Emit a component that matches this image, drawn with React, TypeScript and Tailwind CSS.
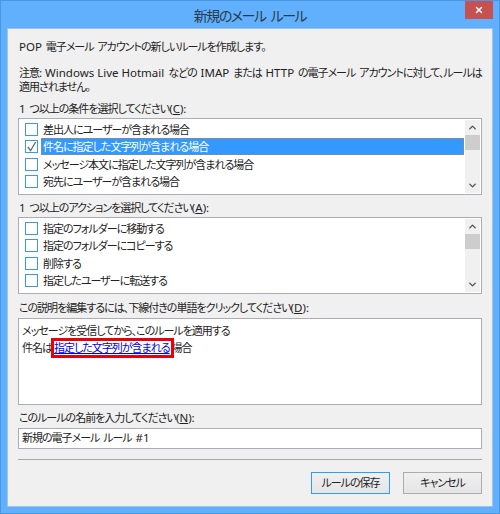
import React from 'react';
import { ChevronUp, ChevronDown, X } from 'lucide-react';

const font = "font-['Noto_Sans','Noto_Sans_CJK_JP',sans-serif] [font-feature-settings:'palt']";

// latin runs are wider than the squeezed kana around them
const L = ({ children }: { children: React.ReactNode }) => (
  <span className="text-[11.5px] tracking-normal [word-spacing:0px]">{children}</span>
);

const Access = ({ k }: { k: string }) => (
  <L>
    (<span className="underline">{k}</span>):
  </L>
);

const CheckIcon = () => (
  <svg viewBox="0 0 12 12" className="w-3 h-3">
    <path d="M2 6 L5 10 L10.5 0.5" fill="none" stroke="#5a6b80" strokeWidth="1.4" />
  </svg>
);

const Row = ({ text, checked, selected }: { text: string; checked?: boolean; selected?: boolean }) => (
  <div className="flex items-center h-[17.3px]">
    <div className="ml-[6px] w-[13px] h-[13px] border border-[#3a9ae8] bg-white flex items-center justify-center shrink-0">
      {checked && <CheckIcon />}
    </div>
    <div
      className={`ml-[3px] mr-[1px] flex-1 h-[17px] pl-[2px] leading-[17px] whitespace-nowrap overflow-hidden ${
        selected ? 'bg-[#3399ff] text-white outline-1 outline-dotted outline-[#c08040] -outline-offset-1' : ''
      }`}
    >
      {text}
    </div>
  </div>
);

const Scrollbar = () => (
  <div className="w-[15px] mr-[1px] my-[1px] bg-[#f0f0f0] flex flex-col items-center shrink-0">
    <ChevronUp className="w-[11px] h-[15px] text-[#505050]" strokeWidth={3} />
    <div className="w-full h-[15px] bg-[#cdcdcd]" />
    <div className="flex-1" />
    <ChevronDown className="w-[11px] h-[15px] text-[#505050]" strokeWidth={3} />
  </div>
);

const CheckList = ({ rows }: { rows: { text: string; checked?: boolean; selected?: boolean }[] }) => (
  <div className="mx-[10px] h-[77px] border border-[#abadb3] bg-white flex">
    <div className="flex-1 pt-[2px] min-w-0 overflow-hidden">
      {rows.map((r) => (
        <Row key={r.text} {...r} />
      ))}
    </div>
    <Scrollbar />
  </div>
);

export default function App() {
  return (
    <div
      className={`w-[500px] h-[514px] bg-[#60b0fd] border border-[#4a97e0] flex flex-col text-[11px] tracking-[-1px] [word-spacing:2px] text-[#222] relative ${font}`}
    >
      {/* Title bar */}
      <div className="h-[27px] flex items-center justify-center text-[14px] tracking-[-1.5px] [word-spacing:3px] text-[#2a3a4a] shrink-0 pt-[1px]">
        新規のメール ルール
      </div>
      <div className="absolute right-[6px] top-0 w-[28px] h-[18px] bg-[#c75050] flex items-center justify-center">
        <X className="w-[10px] h-[10px] text-white" strokeWidth={3.5} />
      </div>

      {/* Body */}
      <div className="mx-[6px] h-[479px] bg-[#f0f0f0] border border-[#9fc4e6] flex flex-col">
        <div className="px-[11px] pt-[11px] leading-[14px]">
          <L>POP</L> 電子メール アカウントの新しいルールを作成します。
        </div>
        <div className="px-[11px] pt-[12px] leading-[14px] whitespace-nowrap">
          注意<L>: Windows Live Hotmail</L> などの <L>IMAP</L> または <L>HTTP</L> の電子メール アカウントに対して、ルールは
          <br />
          適用されません。
        </div>
        <div className="px-[11px] pt-[8px] h-[24px] leading-[14px]">
          <L>1</L> つ以上の条件を選択してください<Access k="C" />
        </div>
        <CheckList
          rows={[
            { text: '差出人にユーザーが含まれる場合' },
            { text: '件名に指定した文字列が含まれる場合', checked: true, selected: true },
            { text: 'メッセージ本文に指定した文字列が含まれる場合' },
            { text: '宛先にユーザーが含まれる場合' },
          ]}
        />
        <div className="px-[11px] pt-[6px] h-[22px] leading-[14px]">
          <L>1</L> つ以上のアクションを選択してください<Access k="A" />
        </div>
        <CheckList
          rows={[
            { text: '指定のフォルダーに移動する' },
            { text: '指定のフォルダーにコピーする' },
            { text: '削除する' },
            { text: '指定したユーザーに転送する' },
          ]}
        />
        <div className="px-[11px] pt-[7px] h-[24px] leading-[14px]">
          この説明を編集するには、下線付きの単語をクリックしてください<Access k="D" />
        </div>
        <div className="mx-[10px] h-[87px] border border-[#abadb3] bg-white px-[3px] pt-[3px] leading-[17px]">
          <div>メッセージを受信してから、このルールを適用する</div>
          <div className="whitespace-nowrap">
            件名は
            <span className="relative ml-[2px] mr-[2px] text-[#0000ee] underline">
              指定した文字列が含まれる
              <span className="absolute -left-[3px] -right-[4px] -top-[2px] -bottom-[3px] border-[3px] border-[#e8000b]" />
            </span>
            場合
          </div>
        </div>
        <div className="px-[11px] pt-[6px] h-[23px] leading-[14px]">
          このルールの名前を入力してください<Access k="N" />
        </div>
        <div className="mx-[10px] h-[21px] border border-[#abadb3] bg-white px-[3px] leading-[18px]">
          新規の電子メール ルール <L>#1</L>
        </div>
        <div className="mx-[10px] mt-[10px] border-t border-[#a8a8a8]" />
        <div className="flex justify-end gap-[13px] mx-[10px] mt-[12px]">
          <div className="w-[79px] h-[22px] border border-[#3399ff] bg-gradient-to-b from-[#f0f0f0] to-[#e5e5e5] flex items-center justify-center">
            ルールの保存
          </div>
          <div className="w-[79px] h-[22px] border border-[#acacac] bg-gradient-to-b from-[#f0f0f0] to-[#e5e5e5] flex items-center justify-center">
            キャンセル
          </div>
        </div>
      </div>
    </div>
  );
}
